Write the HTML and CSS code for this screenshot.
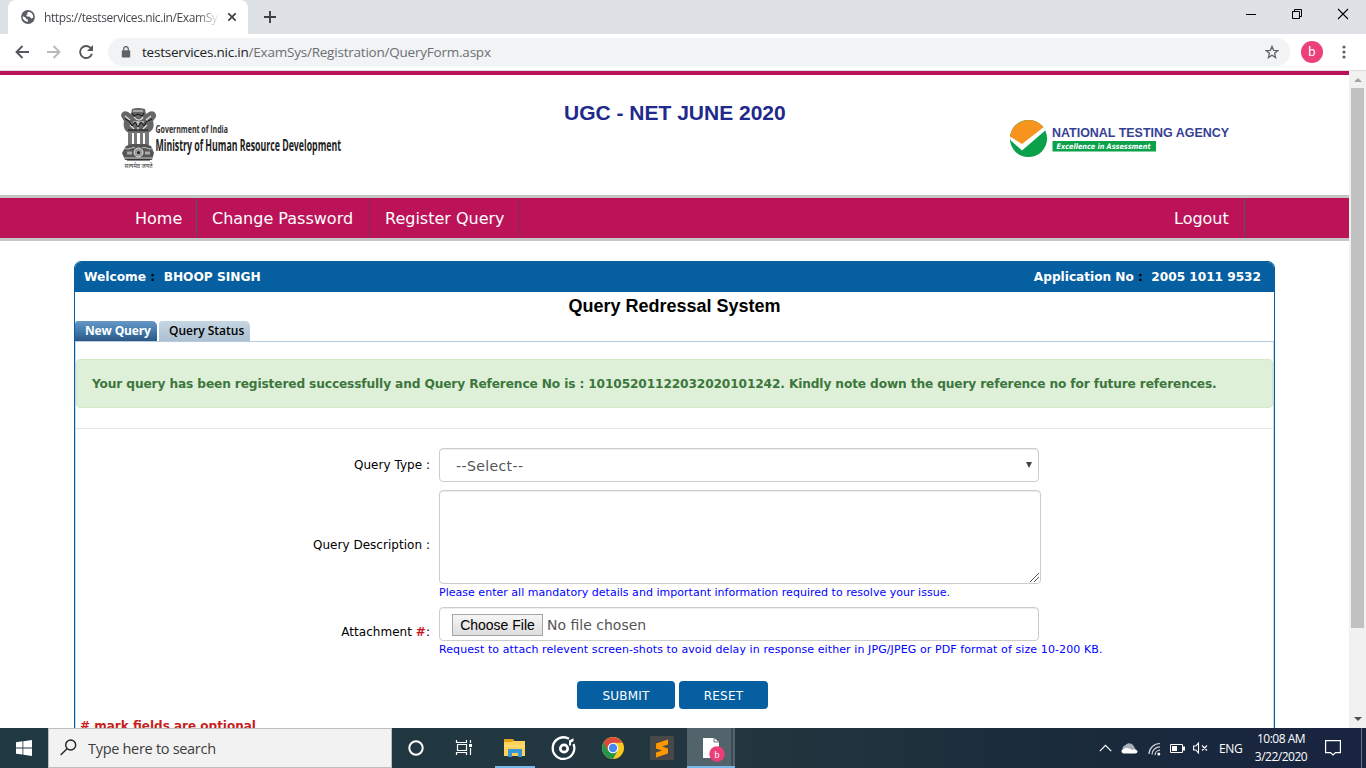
FILE: index.html
```html
<!DOCTYPE html>
<html lang="en">
<head>
<meta charset="utf-8">
<title>Query Redressal System</title>
<link rel="stylesheet" href="styles.css">
</head>
<body>
<div class="tabstrip">
  <div class="browser-tab">
    <svg class="globe" width="14" height="14" viewBox="0 0 14 14"><circle cx="7" cy="7" r="6.9" fill="#5a5e63"/><path d="M2 6.2l2.6 1.2.6 1.7 1.6.5v2.3C3.800 11.600 1.700 9.600 1.600 7zM7.600 1.700L6 2.900l.6 1.300-1.500.9 1 1.300 2.600.4 1.500 1.700 2-.8c.4-3-1.600-5.500-4.600-6z" fill="#fff"/></svg>
    <span class="tab-title">https://testservices.nic.in/ExamSy</span>
    <svg class="tab-close" width="10" height="10" viewBox="0 0 10 10"><path d="M1.300 1.300l7.400 7.400M8.700 1.300L1.300 8.700" stroke="#3c4043" stroke-width="1.700"/></svg>
  </div>
  <svg class="new-tab" width="12" height="12" viewBox="0 0 12 12"><path d="M6 0v12M0 6h12" stroke="#3c4043" stroke-width="1.9"/></svg>
  <div class="window-controls">
    <svg width="46" height="28" viewBox="0 0 46 28"><path d="M18 14.500h10" stroke="#000"/></svg>
    <svg width="46" height="28" viewBox="0 0 46 28"><path d="M18.500 11.500h7v7h-7zM20.500 11V9.500h7v7H26" fill="none" stroke="#000"/></svg>
    <svg width="46" height="28" viewBox="0 0 46 28"><path d="M18 9l10 10M28 9L18 19" stroke="#000" stroke-width="1.100"/></svg>
  </div>
</div>
<div class="toolbar">
  <svg class="tool" width="14" height="14" viewBox="0 0 14 14"><path d="M14 7H1.500M7.500 1L1.500 7l6 6" fill="none" stroke="#54585d" stroke-width="1.900"/></svg>
  <svg class="tool" width="14" height="14" viewBox="0 0 14 14"><path d="M0 7h12.500M6.500 1l6 6-6 6" fill="none" stroke="#b8babd" stroke-width="1.900"/></svg>
  <svg class="tool" width="14" height="14" viewBox="0 0 14 14"><path d="M12.200 3.800A6 6 0 1 0 12.900 8.700" fill="none" stroke="#54585d" stroke-width="1.900"/><path d="M14 0v6H8z" fill="#54585d"/></svg>
  <div class="address">
    <svg width="10" height="12" viewBox="0 0 10 12"><rect x=".8" y="4.200" width="8.400" height="7.300" rx=".8" fill="#5f6368"/><path d="M2.700 4.500V2.900a2.300 2.300 0 0 1 4.600 0v1.600" fill="none" stroke="#5f6368" stroke-width="1.300"/></svg>
    <span class="url"><b>testservices.nic.in</b>/ExamSys/Registration/QueryForm.aspx</span>
    <svg class="star" width="14" height="14" viewBox="0 0 14 14"><path d="M7 1.400l1.600 3.900 4.200.3-3.200 2.700 1 4.200L7 10.200l-3.600 2.300 1-4.200L1.200 5.600l4.200-.3z" fill="none" stroke="#5f6368" stroke-width="1.300"/></svg>
  </div>
  <span class="avatar">b</span>
  <svg class="kebab" width="4" height="14" viewBox="0 0 4 14"><circle cx="2" cy="2" r="1.600" fill="#5f6368"/><circle cx="2" cy="7" r="1.600" fill="#5f6368"/><circle cx="2" cy="12" r="1.600" fill="#5f6368"/></svg>
</div>

<div class="viewport">
  <main class="page">
    <header class="site-header">
      <svg class="logo-mhrd" width="240" height="66" viewBox="0 0 240 66">
        <g fill="#666">
          <path d="M1 8c0-4 4-6 7-4l3 2 1-5q6-2 13 0l1 5 3-2c4-2 8 1 7 5l-3 4c2 7-1 10-5 12H9C4 23 3 18 4 13z"/>
          <path d="M8 24h4v13H8zM14 24h3v13h-3zM20 24h3v13h-3zM25 24h4v13h-4z" fill="#777"/>
          <path d="M6 38l5-2h15l5 2 3 7-2 7H5l-3-7z" fill="#555"/>
        </g>
        <path d="M13 3h10M14 9c3 4 7 4 9 0M13 14h11M5 8l5 4M31 8l-5 4M10 17l4 4M27 17l-4 4M18 14v8" stroke="#e4e4e4" fill="none" stroke-width="1.200"/>
        <path d="M12 5l2 3 4-2 4 2 2-3M9 13l3 5 3-4 3 5 3-5 3 4 3-5M5 11l4 2M32 11l-4 2M8 22h20M7 52h23" stroke="#111" fill="none"/>
        <path d="M4 40c5 3 8-2 11 0M22 40c4-2 7 3 11 0M4 50h29" stroke="#ccc" fill="none"/>
        <circle cx="18.500" cy="44.500" r="4.500" fill="#999" stroke="#ddd"/><circle cx="18.500" cy="44.500" r="1.500" fill="#222"/>
        <path d="M7 45h5M25 45h5" stroke="#aaa" stroke-width="3"/>
        <text x="4.500" y="60" class="motto" textLength="28" lengthAdjust="spacingAndGlyphs">सत्यमेव जयते</text>
        <text x="35.500" y="25" class="govt" textLength="72.500" lengthAdjust="spacingAndGlyphs">Government of India</text>
        <text x="35.500" y="43" class="ministry" textLength="185.500" lengthAdjust="spacingAndGlyphs">Ministry of Human Resource Development</text>
      </svg>
      <h1 class="exam-title">UGC - NET JUNE 2020</h1>
      <svg class="logo-nta" width="222" height="40" viewBox="0 0 222 40">
        <circle cx="18.500" cy="19.500" r="18.600" fill="#0ba14b"/>
        <path d="M0 18A18.600 18.600 0 0 1 33.500 8.500L12 28z" fill="#f7941e"/>
        <path d="M0 17.500L12 25 33.500 8.300l2 2.900L12 31.500 .3 21z" fill="#fff"/>
        <text x="42" y="17.500" class="nta-name" textLength="177" lengthAdjust="spacingAndGlyphs">NATIONAL TESTING AGENCY</text>
        <rect x="42.500" y="22" width="103.500" height="10.500" fill="#0ba14b"/>
        <text x="46.500" y="30" class="nta-tag" textLength="94" lengthAdjust="spacingAndGlyphs">Excellence in Assessment</text>
      </svg>
    </header>
    <nav class="nav">
      <a class="nav-home">Home</a><a class="nav-password">Change Password</a><a class="nav-register">Register Query</a><a class="nav-logout">Logout</a>
    </nav>
    <section class="panel">
      <div class="panel-head">
        <span class="welcome">Welcome <i>:</i>&nbsp; BHOOP SINGH</span>
        <span class="application">Application No <i>:</i>&nbsp; 2005 1011 9532</span>
      </div>
      <h2 class="panel-title">Query Redressal System</h2>
      <div class="tabs"><span class="tab active">New Query</span><span class="tab">Query Status</span></div>
      <div class="tab-body">
        <div class="alert"><span>Your query has been registered successfully and Query Reference No is : 10105201122032020101242. Kindly note down the query reference no for future references.</span></div>
        <div class="form">
          <label class="label-type">Query Type :</label>
          <div class="control select"><span>--Select--</span><svg width="6" height="6" viewBox="0 0 6 6"><path d="M0 0h6L3 6z" fill="#444"/></svg></div>
          <label class="label-desc">Query Description :</label>
          <div>
            <div class="control area"><svg width="9" height="9" viewBox="0 0 9 9"><path d="M0 9L9 0M4 9l5-5" stroke="#555" fill="none"/></svg></div>
            <p class="hint hint-desc">Please enter all mandatory details and important information required to resolve your issue.</p>
          </div>
          <label class="label-file">Attachment <b>#</b>:</label>
          <div>
            <div class="control file"><span class="choose">Choose File</span><span class="chosen">No file chosen</span></div>
            <p class="hint hint-file">Request to attach relevent screen-shots to avoid delay in response either in JPG/JPEG or PDF format of size 10-200 KB.</p>
          </div>
        </div>
        <div class="buttons"><span class="btn submit">SUBMIT</span><span class="btn reset">RESET</span></div>
        <p class="optional"># mark fields are optional</p>
      </div>
    </section>
  </main>
  <div class="scrollbar">
    <svg width="8" height="4" viewBox="0 0 8 4"><path d="M0 4l4-4 4 4z" fill="#a3a3a3"/></svg>
    <div class="thumb"></div>
    <svg class="down" width="8" height="4" viewBox="0 0 8 4"><path d="M0 0l4 4 4-4z" fill="#505050"/></svg>
  </div>
</div>

<footer class="taskbar">
  <div class="start"><svg width="16" height="16" viewBox="0 0 16 16"><path d="M0 2.200L6.500 1.300v6.200H0zM7.300 1.200L16 0v7.500H7.300zM0 8.400h6.500v6.200L0 13.700zM7.300 8.400H16V16l-8.700-1.200z" fill="#fff"/></svg></div>
  <div class="search"><svg width="17" height="17" viewBox="0 0 17 17"><circle cx="10.700" cy="6" r="5" fill="none" stroke="#222" stroke-width="1.400"/><path d="M7 9.700L.7 16" stroke="#222" stroke-width="1.400"/></svg><span>Type here to search</span></div>
  <div class="apps">
    <svg width="48" height="40" viewBox="0 0 48 40"><circle cx="24" cy="20" r="6.700" fill="none" stroke="#fff" stroke-width="2"/></svg>
    <svg width="50" height="40" viewBox="0 0 50 40"><path d="M16.500 12v2.500h10V12M16.500 27v-2.500h10V27M17.500 16.500h9v6h-9zM30.500 12v3M30.500 20v7" fill="none" stroke="#fff" stroke-width="1.200"/><path d="M29 16h3v3h-3z" fill="#fff"/></svg>
    <svg width="49" height="40" viewBox="0 0 49 40"><path d="M14 11h9l1 2h11v15H14z" fill="#ffd35b"/><path d="M14 11h9v3h-9z" fill="#e5a216"/><path d="M18 21h14v8h-4v-4h-6v4h-4z" fill="#3995d6"/><path d="M14 18h21" stroke="#ffe18a"/><path d="M5 38h40v2H5z" fill="#76b9ed"/></svg>
    <svg width="49" height="40" viewBox="-.5 0 49 40"><path d="M29.500 10.800A10.800 10.800 0 1 0 34 16" fill="none" stroke="#fff" stroke-width="2.300"/><circle cx="24.500" cy="20.500" r="3.700" fill="none" stroke="#fff" stroke-width="2.700"/><path d="M29.500 17.500v-5l4.500-2.200v3l-2.500 1.200v3z" fill="#fff"/></svg>
    <svg width="50" height="40" viewBox="0 0 50 40"><circle cx="25" cy="20" r="11" fill="#fbc91f"/><path d="M25 20L15.500 14.500A11 11 0 0 0 25 31l4.500-8z" fill="#24964a"/><path d="M15.500 14.500A11 11 0 0 1 34.500 14.700H25l-4.800 8z" fill="#dc4a3d"/><circle cx="25" cy="20" r="5.300" fill="#fff"/><circle cx="25" cy="20" r="4.200" fill="#4688f1"/></svg>
    <svg width="49" height="40" viewBox="0 0 49 40"><rect x="12" y="8" width="24" height="24" rx="1.500" fill="#484848"/><path d="M30 11.500v5l-6 2 6 2v5l-12 4v-5l6-2-6-2v-5z" fill="#ff9800"/></svg>
    <svg width="48" height="40" viewBox="0 0 48 40"><path d="M0 0h48v40H0z" fill="#52636c"/><path d="M16 10h11l5 4v16H16z" fill="#fff"/><path d="M27 10v4h5" fill="none" stroke="#657078"/><path d="M45 0v40" stroke="#26373f"/><circle cx="30" cy="26" r="7.700" fill="#ec3d78"/><text x="27.400" y="29.500" class="badge-letter">b</text><path d="M0 38h48v2H0z" fill="#76b9ed"/></svg>
  </div>
  <div class="tray">
    <svg width="13" height="8" viewBox="0 0 13 8"><path d="M.8 7.200L6.500 1.400l5.700 5.800" fill="none" stroke="#fff" stroke-width="1.200"/></svg>
    <svg class="cloud" width="17" height="12" viewBox="0 0 17 12"><path d="M2 8a3 3 0 0 1 2-4.500 5 5 0 0 1 8-.5l3 5z" fill="#aab0ba"/><path d="M3 11.500c-3-.3-3.500-3.500-.5-4.500 2-.8 3.500-1.500 5.500-.5l3.500 1.500c3-1.200 5 .3 5 1.500 0 1.200-1 2-2.500 2z" fill="#fff"/></svg>
    <svg class="wifi" width="14" height="14" viewBox="0 0 14 14"><path d="M1 12A11 11 0 0 1 12 1.500M4 12.500A8 8 0 0 1 12 4.800M7 13A5 5 0 0 1 12 8.200" fill="none" stroke="#d0d4da" stroke-width="1.200"/><circle cx="10.800" cy="12" r="1.500" fill="#fff"/></svg>
    <svg class="battery" width="15" height="9" viewBox="0 0 15 9"><path d="M.5.500h12v8H.500z" fill="none" stroke="#fff"/><path d="M2 2h5v5H2zM13 2.500h2v4h-2z" fill="#fff"/></svg>
    <svg class="sound" width="15" height="12" viewBox="0 0 15 12"><path d="M.6 4h2.200L5.500 1v10L2.800 8H.6zM9 3.500l5 5M14 3.500l-5 5" fill="none" stroke="#fff" stroke-width="1.100"/></svg>
    <span class="lang">ENG</span>
    <div class="clock"><span class="time">10:08 AM</span><span class="date">3/22/2020</span></div>
    <svg class="notice" width="16" height="16" viewBox="0 0 16 16"><path d="M.6.600h14.800v12H10.500L8 15l-2.500-2.400H.6z" fill="none" stroke="#fff" stroke-width="1.200"/></svg>
    <div class="peek"></div>
  </div>
</footer>
</body>
</html>
```
FILE: styles.css
```css
* { box-sizing: border-box; }
html, body { width: 1366px; height: 768px; margin: 0; overflow: hidden; }
body { display: flex; flex-direction: column; background: #fff; color: #000; font-family: "DejaVu Sans", sans-serif; }
svg { display: block; flex: none; }
span, a, label, p, h1, h2 { white-space: nowrap; }
p, h1, h2 { margin: 0; }

.tabstrip { display: flex; align-items: flex-start; height: 34px; flex: none; background: #dee1e6; padding-left: 8px; }
.browser-tab { display: flex; align-items: center; width: 240px; height: 34px; padding-left: 13px; background: #fff; border-radius: 8px 8px 0 0; }
.tab-title { width: 176px; margin: 0 7px 0 9px; overflow: hidden; color: #45494d; font: 12px "Open Sans", sans-serif; letter-spacing: -.4px; -webkit-mask-image: linear-gradient(90deg, #000 153px, transparent 176px); mask-image: linear-gradient(90deg, #000 153px, transparent 176px); }
.new-tab { margin: 11px 0 0 16px; }
.window-controls { display: flex; margin-left: auto; }

.toolbar { display: flex; align-items: center; height: 37px; flex: none; padding-left: 15px; background: #fff; border-bottom: 1px solid #dadce0; }
.tool { margin-right: 18px; }
.address { display: flex; align-items: center; width: 1182px; height: 28px; margin-left: -3px; padding: 0 11px 0 13px; border-radius: 14px; background: #f1f3f4; }
.url { margin-left: 11px; color: #6b6f74; font: 13.500px "Open Sans", sans-serif; letter-spacing: -.22px; }
.url b { color: #202124; font-weight: 400; }
.star { margin-left: auto; }
.avatar { width: 22px; height: 22px; margin-left: 11px; border-radius: 50%; background: #ec407a; color: #fff; font: 13px/21px Roboto, sans-serif; text-align: center; }
.kebab { margin-left: 19px; }

.viewport { display: flex; height: 657px; flex: none; overflow: hidden; }
.page { width: 1349px; height: 657px; overflow: hidden; border-top: 4px solid #bc1358; }
.scrollbar { display: flex; flex-direction: column; align-items: center; width: 17px; padding: 7px 0 7px; background: #f1f1f1; }
.thumb { width: 13px; height: 540px; margin-top: 6px; background: #c1c1c1; }
.down { margin-top: auto; }

.site-header { display: flex; align-items: flex-start; height: 120px; padding-left: 120px; }
.logo-mhrd { margin-top: 33px; }
.motto { font: 7px "Noto Sans", sans-serif; fill: #333; }
.govt { font: 700 10px "Open Sans", sans-serif; fill: #333; }
.ministry { font: 700 15.500px "Open Sans", sans-serif; fill: #222; }
.exam-title { width: 221px; margin: 25px 0 0 204px; color: #20298c; font: bold 21px/25px "Liberation Sans", Arial, sans-serif; }
.logo-nta { margin: 44px 0 0 225px; }
.nta-name { font: bold 12px "Liberation Sans", Arial, sans-serif; fill: #363f95; }
.nta-tag { font: italic bold 7.500px "DejaVu Sans", sans-serif; fill: #fff; }

.nav { display: flex; height: 46px; padding-left: 120px; background: #bc1358; border: solid #c6c6c6; border-width: 3px 0; }
.nav a { padding-left: 15px; border-right: 1px solid #7e2d55; color: #fff; font-size: 16px; line-height: 41px; }
.nav .nav-home { width: 77px; border-color: #555; }
.nav-password { width: 173px; }
.nav-register { width: 150px; }
.nav .nav-logout { width: 86px; margin-left: auto; margin-right: 104px; border-color: #555; }

.panel { width: 1201px; height: 500px; margin: 20px 0 0 74px; border: 1px solid #065fa1; border-radius: 7px 7px 0 0; overflow: hidden; }
.panel-head { display: flex; justify-content: space-between; height: 30px; padding: 0 13px 0 9px; background: #065fa1; color: #fff; font-size: 12.200px; font-weight: bold; line-height: 31px; }
.panel-head i { color: #000; font-style: normal; }
.application { letter-spacing: -.04px; }
.panel-title { height: 29px; text-align: center; font: bold 18px/28px "Liberation Sans", Arial, sans-serif; }
.tabs { display: flex; gap: 2px; height: 21px; border-bottom: 1px solid #b4cbdf; }
.tab { width: 91px; height: 20px; padding-left: 10px; border-radius: 3px 5px 0 0; background: linear-gradient(#c5d6e3, #adc0d1); font: 600 12px/19px "Open Sans", sans-serif; }
.tab.active { width: 82px; background: linear-gradient(#6798c5, #3e77a9 55%, #2d5784); color: #fff; font-weight: 700; letter-spacing: -.15px; }
.tab-body { height: 400px; padding-top: 17px; border: solid #c6d9e5; border-width: 0 1px; }
.alert { height: 49px; padding-left: 15px; border: 1px solid #d6e9c6; border-radius: 4px; background: #dff0d8; color: #3c763d; font-size: 12.200px; font-weight: bold; letter-spacing: -.132px; line-height: 49px; }
.form { display: grid; grid-template-columns: 354px 1fr; grid-template-rows: 42px 117px 74px; column-gap: 9px; margin-top: 20px; padding-top: 19px; border-top: 1px solid #e6e6e6; font-size: 12px; }
.form label { text-align: right; letter-spacing: .03px; }
.label-type { padding-top: 10px; }
.label-desc { padding-top: 48px; }
.label-file { padding-top: 18px; }
.label-file b { color: #c4161c; }
.control { display: flex; align-items: center; width: 600px; height: 34px; border: 1px solid #ccc; border-radius: 4px; background: #fff; box-shadow: inset 0 1px 1px rgba(0, 0, 0, .075); color: #555; font-size: 14px; }
.select { justify-content: space-between; padding: 0 6px 0 16px; }
.select span { padding-top: 2px; letter-spacing: .4px; }
.area { align-items: flex-end; justify-content: flex-end; width: 602px; height: 94px; padding: 1px; }
.file { padding: 2px 0 0 12px; }
.choose { width: 91px; height: 22px; border: 1px solid #a6a6a6; background: linear-gradient(#f6f6f6, #ddd); color: #000; font: 14px/20px "Liberation Sans", Arial, sans-serif; text-align: center; }
.chosen { margin-left: 4px; }
.hint { padding-top: 1px; color: #00f; font-size: 11px; line-height: 16px; letter-spacing: .025px; }
.hint-file { letter-spacing: .095px; }
.buttons { display: flex; justify-content: center; gap: 4px; padding-right: 4px; }
.btn { width: 98px; height: 28px; border-radius: 4px; background: #065fa1; color: #fff; font-size: 12px; line-height: 30px; letter-spacing: .2px; text-align: center; }
.btn.reset { width: 89px; }
.optional { margin: 8px 0 0 4px; color: #c81e1e; font: bold 12px/18px "DejaVu Sans", sans-serif; }

.taskbar { display: flex; height: 40px; flex: none; background: linear-gradient(90deg, #213943, #22363f 55%, #1a2b3a 78%, #192441); color: #fff; }
.start { display: flex; align-items: center; justify-content: center; width: 48px; }
.search { display: flex; align-items: center; width: 344px; padding: 0 0 1px 11px; border: 1px solid #bdbdbd; background: #f2f2f2; color: #3d3d3d; font: 14.500px "Open Sans", sans-serif; }
.search span { margin: 2px 0 0 11px; letter-spacing: -.3px; }
.apps { display: flex; }
.badge-letter { font: 9px Roboto, sans-serif; fill: #fff; }
.tray { display: flex; align-items: center; margin-left: auto; font: 12px "Open Sans", sans-serif; }
.cloud { margin-left: 9px; }
.wifi { margin-left: 10px; margin-top: 2px; }
.battery { margin-left: 8px; }
.sound { margin-left: 8px; }
.lang { width: 25px; margin-left: 11px; letter-spacing: -.3px; }
.clock { display: flex; flex-direction: column; align-items: center; width: 54px; margin-left: 10px; line-height: 18px; letter-spacing: -.5px; text-align: center; }
.notice { margin-left: 17px; }
.peek { width: 5px; height: 40px; margin-left: 20px; border-left: 1px solid #68717f; }
```
